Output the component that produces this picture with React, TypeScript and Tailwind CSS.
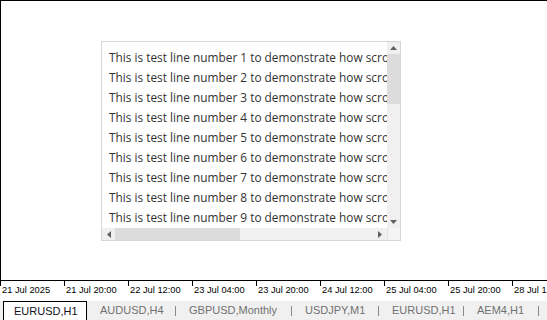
import React from "react"

const axis = [
	"21 Jul 2025",
	"21 Jul 20:00",
	"22 Jul 12:00",
	"23 Jul 04:00",
	"23 Jul 20:00",
	"24 Jul 12:00",
	"25 Jul 04:00",
	"25 Jul 20:00",
	"28 Jul 12:00",
]

const tabs = [
	{ name: "AUDUSD,H4", w: "w-[89px]" },
	{ name: "GBPUSD,Monthly", w: "w-[116px]" },
	{ name: "USDJPY,M1", w: "w-[87px]" },
	{ name: "EURUSD,H1", w: "w-[85px]" },
	{ name: "AEM4,H1", w: "w-[75px]" },
]

const lines = Array.from({ length: 9 }, (_, i) => i + 1)

function Arrow({ dir }: { dir: "up" | "down" | "left" | "right" }) {
	const pts = {
		up: "0,4 7,4 3.5,0",
		down: "0,0 7,0 3.5,4",
		left: "4,0 4,7 0,3.5",
		right: "0,0 0,7 4,3.5",
	}[dir]
	const vertical = dir === "up" || dir === "down"
	return (
		<svg width={vertical ? 7 : 4} height={vertical ? 4 : 7} viewBox={vertical ? "0 0 7 4" : "0 0 4 7"}>
			<polygon points={pts} fill="#606060" />
		</svg>
	)
}

function ListBox() {
	return (
		<div className="absolute left-[100px] top-[40px] flex h-[200px] w-[300px] flex-col border border-[#d6d6d6] bg-white">
			<div className="flex min-h-0 flex-1">
				<div className="min-w-0 flex-1 overflow-hidden pl-[7px] pt-[5px]">
					{lines.map((n) => (
						<div key={n} className="h-[20px] whitespace-nowrap text-[11.85px] leading-[20px] text-[#333]">
							This is test line number {n} to demonstrate how scrolling works in this list
						</div>
					))}
				</div>
				<div className="flex w-[13px] flex-col bg-[#f0f0f0]">
					<div className="flex h-[12px] items-center justify-center">
						<Arrow dir="up" />
					</div>
					<div className="h-[50px] bg-[#dcdcdc]" />
					<div className="flex-1" />
					<div className="flex h-[12px] items-center justify-center">
						<Arrow dir="down" />
					</div>
				</div>
			</div>
			<div className="flex h-[12px] bg-[#f0f0f0]">
				<div className="flex w-[13px] items-center justify-center">
					<Arrow dir="left" />
				</div>
				<div className="w-[125px] bg-[#dcdcdc]" />
				<div className="flex-1" />
				<div className="flex w-[14px] items-center justify-center">
					<Arrow dir="right" />
				</div>
				<div className="w-[13px] border-l border-[#e4e4e4] bg-[#f4f4f4]" />
			</div>
		</div>
	)
}

export default function App() {
	return (
		<div className="flex h-[320px] w-[547px] flex-col overflow-hidden bg-white font-['Open_Sans',sans-serif]">
			<div className="relative h-[281px] shrink-0 border-b border-l border-t border-black">
				<ListBox />
			</div>
			<div className="flex h-[20px] shrink-0 overflow-hidden font-['Liberation_Sans',sans-serif] text-[9.3px] leading-[10px] text-black">
				{axis.map((a) => (
					<div key={a} className="flex w-[64px] shrink-0 items-start">
						<div className="h-[5px] w-px bg-black" />
						<span className="ml-[1px] mt-[4px] whitespace-nowrap">{a}</span>
					</div>
				))}
			</div>
			<div className="flex h-[19px] shrink-0 items-stretch bg-[#f0f0f0] pl-[3px] font-['Liberation_Sans',sans-serif] text-[11px]">
				<div className="flex w-[84px] items-center border-l border-r border-t border-black bg-white pl-[10px] text-[#101020]">
					EURUSD,H1
				</div>
				{tabs.map((t) => (
					<div key={t.name} className={`flex ${t.w} shrink-0 items-center`}>
						<span className="flex-1 whitespace-nowrap pl-[13px] text-[#707070]">{t.name}</span>
						<div className="h-[10px] w-px bg-[#8a8a8a]" />
					</div>
				))}
			</div>
		</div>
	)
}
